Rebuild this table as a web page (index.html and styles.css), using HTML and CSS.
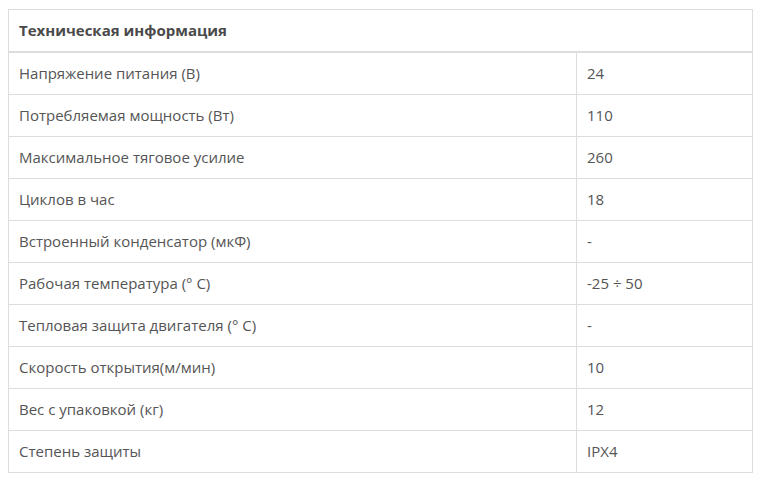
FILE: index.html
```html
<!DOCTYPE html>
<html lang="ru">
<head>
<meta charset="utf-8">
<link rel="stylesheet" href="styles.css">
</head>
<body>
<table class="spec">
  <thead>
    <tr><th colspan="2">Техническая информация</th></tr>
  </thead>
  <tbody>
    <tr><td class="name">Напряжение питания (В)</td><td>24</td></tr>
    <tr><td class="name">Потребляемая мощность (Вт)</td><td>110</td></tr>
    <tr><td class="name">Максимальное тяговое усилие</td><td>260</td></tr>
    <tr><td class="name">Циклов в час</td><td>18</td></tr>
    <tr><td class="name">Встроенный конденсатор (мкФ)</td><td>-</td></tr>
    <tr><td class="name">Рабочая температура (° C)</td><td>-25 ÷ 50</td></tr>
    <tr><td class="name">Тепловая защита двигателя (° C)</td><td>-</td></tr>
    <tr><td class="name">Скорость открытия(м/мин)</td><td>10</td></tr>
    <tr><td class="name">Вес с упаковкой (кг)</td><td>12</td></tr>
    <tr><td class="name">Степень защиты</td><td>IPX4</td></tr>
  </tbody>
</table>
</body>
</html>
```
FILE: styles.css
```css
html, body {
  background: #fff;
}
body {
  margin: 9px 8px;
  font-family: "Open Sans", "Liberation Sans", sans-serif;
  font-size: 15px;
  color: #555;
}
.spec {
  width: 745px;
  border-collapse: collapse;
  border: 1px solid #ddd;
}
.spec th,
.spec td {
  border: 1px solid #ddd;
  padding: 10px;
  line-height: 21px;
  text-align: left;
  vertical-align: middle;
}
.spec th {
  font-weight: 700;
  color: #4a4a4a;
  border-bottom-width: 2px;
}
.spec td.name {
  width: 547px;
}
```
